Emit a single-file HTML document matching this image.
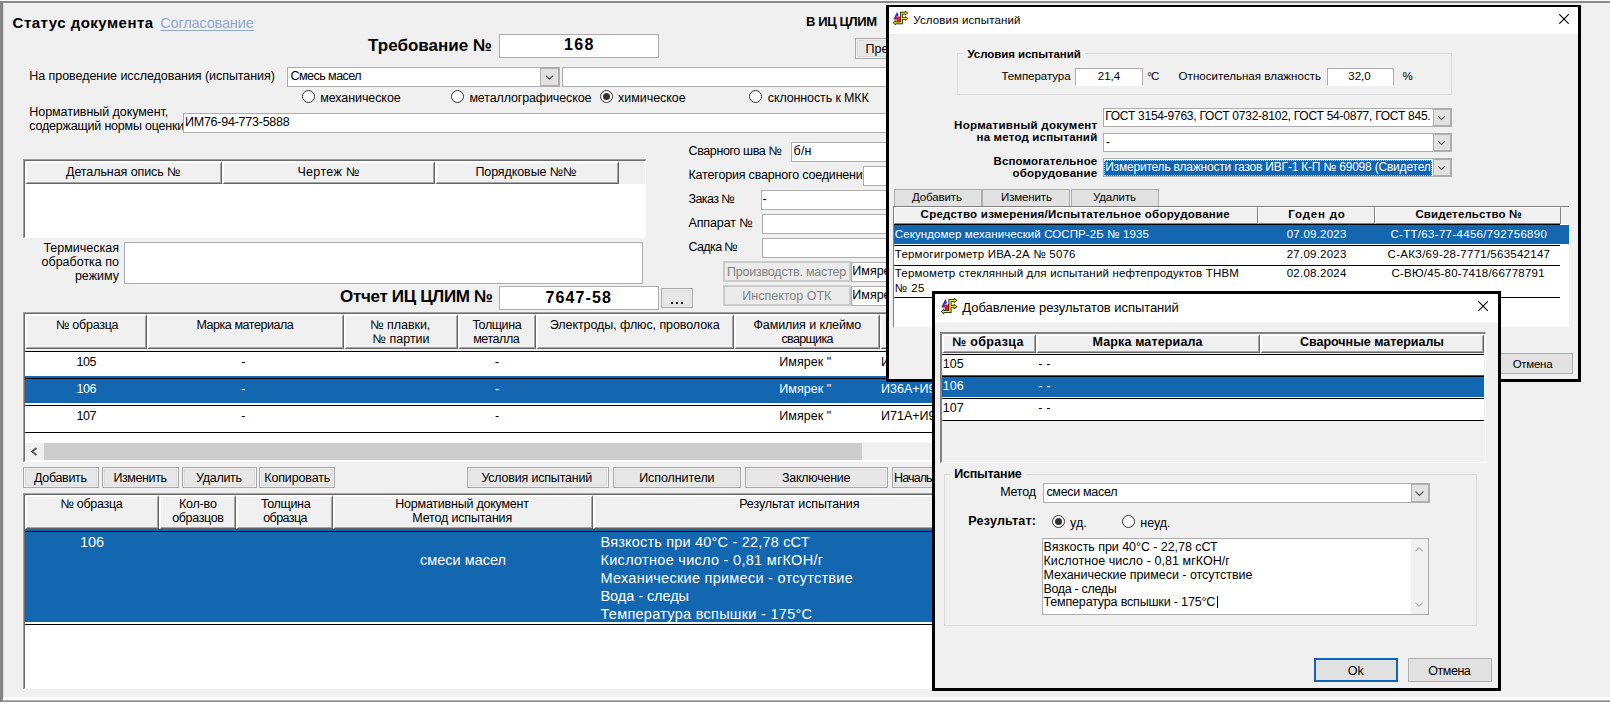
<!DOCTYPE html>
<html><head><meta charset="utf-8"><title>UI</title>
<style>

html,body{margin:0;padding:0;}
body{width:1610px;height:702px;overflow:hidden;background:#f0f0f0;position:relative;font-family:"Liberation Sans",sans-serif;color:#000;}
.a{position:absolute;box-sizing:border-box;}
.t{white-space:nowrap;}
.inp{background:#fff;border:1px solid #adadad;}
.btn{background:#e1e1e1;border:1px solid #adadad;}
.btn2{background:#e7e7e7;border:1px solid #a9a9a9;box-shadow:inset 0 0 0 1px #efefef,inset 0 0 0 2px #dddddd;}
.hd{background:#f0f0f0;border-style:solid;border-width:2px 1px 1px 2px;border-color:#fff #646464 #646464 #fff;box-shadow:inset -1px -1px 0 #a6a6a6;}
.sel{background:#1267b0;}
.ln{background:#000;}
.dlg{background:#f0f0f0;border:3px solid #000;overflow:hidden;}

</style></head>
<body>
<div class="a " style="left:0px;top:0px;width:1610px;height:1px;background:#fafafa"></div>
<div class="a " style="left:0px;top:1px;width:1610px;height:2px;background:#8a8a8a"></div>
<div class="a " style="left:0px;top:1px;width:3px;height:701px;background:#848484"></div>
<div class="a " style="left:3px;top:3px;width:1px;height:699px;background:#d8d8d8"></div>
<div class="a t" style="font-size:15px;line-height:18px;height:18px;top:14.00px;font-weight:bold;letter-spacing:0.484px;left:12.6px;">Статус документа</div>
<div class="a t" style="font-size:14.5px;line-height:17px;height:17px;top:15.00px;color:#8ea9d3;letter-spacing:-0.161px;left:160.2px;text-decoration:underline;text-decoration-thickness:1px;text-underline-offset:2px;">Согласование</div>
<div class="a t" style="font-size:17px;line-height:20px;height:20px;top:36.00px;font-weight:bold;letter-spacing:0.022px;left:368px;">Требование №</div>
<div class="a inp" style="left:499px;top:34px;width:160px;height:24px;"></div>
<div class="a t" style="font-size:16px;line-height:19px;height:19px;top:35.00px;font-weight:bold;letter-spacing:1.304px;left:564.05px;">168</div>
<div class="a t" style="font-size:13px;line-height:16px;height:16px;top:14.00px;font-weight:bold;letter-spacing:-0.405px;left:806px;">В ИЦ ЦЛИМ</div>
<div class="a btn2" style="left:855px;top:38px;width:60px;height:21px;"></div>
<div class="a t" style="font-size:12.5px;line-height:15px;height:15px;top:42.00px;left:865.6px;">Пре</div>
<div class="a t" style="font-size:12.5px;line-height:15px;height:15px;top:69.00px;letter-spacing:-0.055px;left:29.3px;">На проведение исследования (испытания)</div>
<div class="a inp" style="left:287px;top:67px;width:273px;height:20px;"></div>
<div class="a t" style="font-size:12.5px;line-height:15px;height:15px;top:69.00px;letter-spacing:-0.533px;left:290.5px;">Смесь масел</div>
<div class="a " style="left:540px;top:68px;width:19px;height:18px;background:#e1e1e1;border:1px solid #adadad"></div>
<svg class="a" style="left:0;top:0;overflow:visible" width="1" height="1"><path d="M546.0,75.75 L549.5,79.25 L553.0,75.75" stroke="#505050" stroke-width="1.1" fill="none"/></svg>
<div class="a inp" style="left:562px;top:67px;width:330px;height:20px;"></div>
<div class="a" style="left:302.0px;top:90.0px;width:13px;height:13px;border:1px solid #333;border-radius:50%;background:#fff"></div>
<div class="a t" style="font-size:12.5px;line-height:15px;height:15px;top:91.00px;letter-spacing:-0.085px;left:320.2px;">механическое</div>
<div class="a" style="left:451.0px;top:90.0px;width:13px;height:13px;border:1px solid #333;border-radius:50%;background:#fff"></div>
<div class="a t" style="font-size:12.5px;line-height:15px;height:15px;top:91.00px;letter-spacing:-0.135px;left:469.4px;">металлографическое</div>
<div class="a" style="left:600.0px;top:90.0px;width:13px;height:13px;border:1px solid #333;border-radius:50%;background:#fff"></div>
<div class="a" style="left:603.0px;top:93.0px;width:7px;height:7px;border-radius:50%;background:#333"></div>
<div class="a t" style="font-size:12.5px;line-height:15px;height:15px;top:91.00px;letter-spacing:-0.037px;left:618px;">химическое</div>
<div class="a" style="left:749.0px;top:90.0px;width:13px;height:13px;border:1px solid #333;border-radius:50%;background:#fff"></div>
<div class="a t" style="font-size:12.5px;line-height:15px;height:15px;top:91.00px;letter-spacing:-0.125px;left:767.8px;">склонность к МКК</div>
<div class="a t" style="font-size:12.5px;line-height:15px;height:15px;top:105.00px;letter-spacing:-0.056px;left:29.3px;">Нормативный документ,</div>
<div class="a t" style="font-size:12.5px;line-height:15px;height:15px;top:119.00px;letter-spacing:-0.201px;left:29.3px;">содержащий нормы оценки</div>
<div class="a inp" style="left:183px;top:113px;width:709px;height:20px;"></div>
<div class="a t" style="font-size:12.5px;line-height:15px;height:15px;top:115.00px;letter-spacing:-0.243px;left:185px;">ИМ76-94-773-5888</div>
<div class="a " style="left:23px;top:159px;width:623px;height:79px;background:#a0a0a0"></div>
<div class="a " style="left:24px;top:160px;width:622px;height:78px;background:#fff;border-top:1px solid #6c6c6c;border-left:1px solid #6c6c6c;border-right:1px solid #fff;border-bottom:1px solid #fff"></div>
<div class="a " style="left:25px;top:161px;width:620px;height:23px;background:#f0f0f0"></div>
<div class="a hd" style="left:25px;top:161px;width:197px;height:23px;"></div>
<div class="a t" style="font-size:12.5px;line-height:15px;height:15px;top:165.00px;letter-spacing:-0.080px;left:66px;">Детальная опись №</div>
<div class="a hd" style="left:222px;top:161px;width:213px;height:23px;"></div>
<div class="a t" style="font-size:12.5px;line-height:15px;height:15px;top:165.00px;letter-spacing:0.343px;left:297.4px;">Чертеж №</div>
<div class="a hd" style="left:435px;top:161px;width:184px;height:23px;"></div>
<div class="a t" style="font-size:12.5px;line-height:15px;height:15px;top:165.00px;letter-spacing:-0.095px;left:475.4px;">Порядковые №№</div>
<div class="a t" style="font-size:12.5px;line-height:15px;height:15px;top:241.00px;left:43.41px;">Термическая</div>
<div class="a t" style="font-size:12.5px;line-height:15px;height:15px;top:255.00px;left:41.54px;">обработка по</div>
<div class="a t" style="font-size:12.5px;line-height:15px;height:15px;top:269.00px;left:74.91px;">режиму</div>
<div class="a inp" style="left:124px;top:242px;width:519px;height:42px;"></div>
<div class="a t" style="font-size:17px;line-height:20px;height:20px;top:287.00px;font-weight:bold;letter-spacing:-0.318px;left:340px;">Отчет ИЦ ЦЛИМ №</div>
<div class="a inp" style="left:499px;top:286px;width:160px;height:24px;"></div>
<div class="a t" style="font-size:16px;line-height:19px;height:19px;top:288.00px;font-weight:bold;letter-spacing:1.148px;left:545.40px;">7647-58</div>
<div class="a btn2" style="left:661px;top:288px;width:32px;height:20px;"></div>
<div class="a " style="left:670.6px;top:301.8px;width:2.2px;height:2.2px;background:#111;border-radius:0.6px"></div>
<div class="a " style="left:675.7px;top:301.8px;width:2.2px;height:2.2px;background:#111;border-radius:0.6px"></div>
<div class="a " style="left:680.8px;top:301.8px;width:2.2px;height:2.2px;background:#111;border-radius:0.6px"></div>
<div class="a t" style="font-size:12.5px;line-height:15px;height:15px;top:144.00px;letter-spacing:-0.389px;left:688.5px;">Сварного шва №</div>
<div class="a inp" style="left:791px;top:142px;width:101px;height:20px;"></div>
<div class="a t" style="font-size:12.5px;line-height:15px;height:15px;top:144.00px;letter-spacing:0.232px;left:793.5px;">б/н</div>
<div class="a t" style="font-size:12.5px;line-height:15px;height:15px;top:168.00px;letter-spacing:-0.179px;left:688.5px;">Категория сварного соединени</div>
<div class="a inp" style="left:863px;top:166px;width:30px;height:20px;"></div>
<div class="a t" style="font-size:12.5px;line-height:15px;height:15px;top:192.00px;letter-spacing:-0.595px;left:688.5px;">Заказ №</div>
<div class="a inp" style="left:761px;top:190px;width:131px;height:20px;"></div>
<div class="a t" style="font-size:12.5px;line-height:15px;height:15px;top:192.00px;left:762.6px;">-</div>
<div class="a t" style="font-size:12.5px;line-height:15px;height:15px;top:216.00px;letter-spacing:-0.120px;left:688.5px;">Аппарат №</div>
<div class="a inp" style="left:762px;top:214px;width:130px;height:20px;"></div>
<div class="a t" style="font-size:12.5px;line-height:15px;height:15px;top:240.00px;letter-spacing:-0.632px;left:688.5px;">Садка №</div>
<div class="a inp" style="left:762px;top:238px;width:130px;height:20px;"></div>
<div class="a " style="left:723px;top:261px;width:128px;height:21px;background:#ebebeb;border:2px solid #cbcbcb"></div>
<div class="a t" style="font-size:12.5px;line-height:15px;height:15px;top:265.00px;color:#838383;letter-spacing:-0.206px;left:727px;">Производств. мастер</div>
<div class="a " style="left:723px;top:285px;width:128px;height:21px;background:#ebebeb;border:2px solid #cbcbcb"></div>
<div class="a t" style="font-size:12.5px;line-height:15px;height:15px;top:289.00px;color:#838383;letter-spacing:-0.005px;left:742.3px;">Инспектор ОТК</div>
<div class="a inp" style="left:851px;top:262px;width:45px;height:20px;"></div>
<div class="a t" style="font-size:12.5px;line-height:15px;height:15px;top:264.00px;left:852.3px;">Имярек</div>
<div class="a inp" style="left:851px;top:286px;width:45px;height:20px;"></div>
<div class="a t" style="font-size:12.5px;line-height:15px;height:15px;top:288.00px;left:852.3px;">Имярек</div>
<div class="a " style="left:23px;top:312px;width:920px;height:150px;background:#a0a0a0"></div>
<div class="a " style="left:24px;top:313px;width:919px;height:149px;background:#fff;border-top:1px solid #6c6c6c;border-left:1px solid #6c6c6c;border-right:1px solid #fff;border-bottom:1px solid #fff"></div>
<div class="a " style="left:25px;top:314px;width:918px;height:37px;background:#f0f0f0"></div>
<div class="a hd" style="left:25px;top:314px;width:122px;height:35px;"></div>
<div class="a t" style="font-size:12.5px;line-height:15px;height:15px;top:318.00px;letter-spacing:-0.262px;left:56px;">№ образца</div>
<div class="a hd" style="left:147px;top:314px;width:197px;height:35px;"></div>
<div class="a t" style="font-size:12.5px;line-height:15px;height:15px;top:318.00px;letter-spacing:-0.440px;left:196.4px;">Марка материала</div>
<div class="a hd" style="left:344px;top:314px;width:114px;height:35px;"></div>
<div class="a t" style="font-size:12.5px;line-height:15px;height:15px;top:318.00px;letter-spacing:-0.058px;left:370.3px;">№ плавки,</div>
<div class="a t" style="font-size:12.5px;line-height:15px;height:15px;top:332.00px;letter-spacing:0.004px;left:372.6px;">№ партии</div>
<div class="a hd" style="left:458px;top:314px;width:78px;height:35px;"></div>
<div class="a t" style="font-size:12.5px;line-height:15px;height:15px;top:318.00px;letter-spacing:-0.425px;left:472.4px;">Толщина</div>
<div class="a t" style="font-size:12.5px;line-height:15px;height:15px;top:332.00px;letter-spacing:-0.451px;left:473.2px;">металла</div>
<div class="a hd" style="left:536px;top:314px;width:198px;height:35px;"></div>
<div class="a t" style="font-size:12.5px;line-height:15px;height:15px;top:318.00px;letter-spacing:-0.076px;left:549.8px;">Электроды, флюс, проволока</div>
<div class="a hd" style="left:734px;top:314px;width:146px;height:35px;"></div>
<div class="a t" style="font-size:12.5px;line-height:15px;height:15px;top:318.00px;letter-spacing:-0.099px;left:753.4px;">Фамилия и клеймо</div>
<div class="a t" style="font-size:12.5px;line-height:15px;height:15px;top:332.00px;letter-spacing:-0.674px;left:781.5px;">сварщика</div>
<div class="a hd" style="left:880px;top:314px;width:62px;height:35px;"></div>
<div class="a ln" style="left:25px;top:351px;width:918px;height:1px;"></div>
<div class="a t" style="font-size:12.5px;line-height:15px;height:15px;top:355.00px;color:#000;letter-spacing:-0.427px;left:76.50px;">105</div>
<div class="a t" style="font-size:12.5px;line-height:15px;height:15px;top:355.00px;color:#000;left:241.32px;">-</div>
<div class="a t" style="font-size:12.5px;line-height:15px;height:15px;top:355.00px;color:#000;left:494.92px;">-</div>
<div class="a t" style="font-size:12.5px;line-height:15px;height:15px;top:355.00px;color:#000;letter-spacing:0.039px;left:779.3px;">Имярек &quot;</div>
<div class="a t" style="font-size:12.5px;line-height:15px;height:15px;top:355.00px;color:#000;left:881px;">И</div>
<div class="a sel" style="left:25px;top:376px;width:918px;height:27px;"></div>
<div class="a ln" style="left:25px;top:378px;width:918px;height:1px;"></div>
<div class="a t" style="font-size:12.5px;line-height:15px;height:15px;top:382.00px;color:#fff;letter-spacing:-0.427px;left:76.50px;">106</div>
<div class="a t" style="font-size:12.5px;line-height:15px;height:15px;top:382.00px;color:#fff;left:241.32px;">-</div>
<div class="a t" style="font-size:12.5px;line-height:15px;height:15px;top:382.00px;color:#fff;left:494.92px;">-</div>
<div class="a t" style="font-size:12.5px;line-height:15px;height:15px;top:382.00px;color:#fff;letter-spacing:0.039px;left:779.3px;">Имярек &quot;</div>
<div class="a t" style="font-size:12.5px;line-height:15px;height:15px;top:382.00px;color:#fff;left:881px;">И36А+И9</div>
<div class="a ln" style="left:25px;top:405px;width:918px;height:1px;"></div>
<div class="a t" style="font-size:12.5px;line-height:15px;height:15px;top:409.00px;color:#000;letter-spacing:-0.427px;left:76.50px;">107</div>
<div class="a t" style="font-size:12.5px;line-height:15px;height:15px;top:409.00px;color:#000;left:241.32px;">-</div>
<div class="a t" style="font-size:12.5px;line-height:15px;height:15px;top:409.00px;color:#000;left:494.92px;">-</div>
<div class="a t" style="font-size:12.5px;line-height:15px;height:15px;top:409.00px;color:#000;letter-spacing:0.039px;left:779.3px;">Имярек &quot;</div>
<div class="a t" style="font-size:12.5px;line-height:15px;height:15px;top:409.00px;color:#000;left:881px;">И71А+И9</div>
<div class="a ln" style="left:25px;top:432px;width:918px;height:1px;"></div>
<div class="a " style="left:25px;top:443px;width:918px;height:17px;background:#f0f0f0"></div>
<div class="a " style="left:44px;top:443px;width:818px;height:17px;background:#cdcdcd"></div>
<svg class="a" style="left:30px;top:447px" width="8" height="9" viewBox="0 0 8 9"><path d="M6.5,1 L2,4.5 L6.5,8" stroke="#555" stroke-width="1.8" fill="none"/></svg>
<div class="a btn2" style="left:23px;top:467px;width:76px;height:21px;"></div>
<div class="a t" style="font-size:12.5px;line-height:15px;height:15px;top:471.00px;letter-spacing:-0.320px;left:34px;">Добавить</div>
<div class="a btn2" style="left:102px;top:467px;width:77px;height:21px;"></div>
<div class="a t" style="font-size:12.5px;line-height:15px;height:15px;top:471.00px;letter-spacing:-0.397px;left:113.4px;">Изменить</div>
<div class="a btn2" style="left:181.5px;top:467px;width:75.5px;height:21px;"></div>
<div class="a t" style="font-size:12.5px;line-height:15px;height:15px;top:471.00px;letter-spacing:-0.303px;left:196.1px;">Удалить</div>
<div class="a btn2" style="left:259px;top:467px;width:76px;height:21px;"></div>
<div class="a t" style="font-size:12.5px;line-height:15px;height:15px;top:471.00px;letter-spacing:-0.144px;left:264.3px;">Копировать</div>
<div class="a btn2" style="left:466.5px;top:467px;width:142.5px;height:21px;"></div>
<div class="a t" style="font-size:12.5px;line-height:15px;height:15px;top:471.00px;letter-spacing:-0.193px;left:481.4px;">Условия испытаний</div>
<div class="a btn2" style="left:613px;top:467px;width:128px;height:21px;"></div>
<div class="a t" style="font-size:12.5px;line-height:15px;height:15px;top:471.00px;letter-spacing:-0.085px;left:639.2px;">Исполнители</div>
<div class="a btn2" style="left:745px;top:467px;width:143px;height:21px;"></div>
<div class="a t" style="font-size:12.5px;line-height:15px;height:15px;top:471.00px;letter-spacing:-0.245px;left:781.9px;">Заключение</div>
<div class="a btn2" style="left:892px;top:467px;width:60px;height:21px;"></div>
<div class="a t" style="font-size:12.5px;line-height:15px;height:15px;top:471.00px;letter-spacing:-0.894px;left:894.1px;">Началь</div>
<div class="a " style="left:23px;top:493px;width:920px;height:196px;background:#a0a0a0"></div>
<div class="a " style="left:24px;top:494px;width:919px;height:195px;background:#fff;border-top:1px solid #6c6c6c;border-left:1px solid #6c6c6c;border-right:1px solid #fff;border-bottom:1px solid #fff"></div>
<div class="a " style="left:25px;top:495px;width:918px;height:35px;background:#f0f0f0"></div>
<div class="a hd" style="left:25px;top:495px;width:134px;height:34px;"></div>
<div class="a t" style="font-size:12.5px;line-height:15px;height:15px;top:497.00px;letter-spacing:-0.275px;left:60.4px;">№ образца</div>
<div class="a hd" style="left:159px;top:495px;width:77px;height:34px;"></div>
<div class="a t" style="font-size:12.5px;line-height:15px;height:15px;top:497.00px;letter-spacing:-0.173px;left:178.9px;">Кол-во</div>
<div class="a t" style="font-size:12.5px;line-height:15px;height:15px;top:511.00px;letter-spacing:-0.345px;left:172.2px;">образцов</div>
<div class="a hd" style="left:236px;top:495px;width:97px;height:34px;"></div>
<div class="a t" style="font-size:12.5px;line-height:15px;height:15px;top:497.00px;letter-spacing:-0.358px;left:261px;">Толщина</div>
<div class="a t" style="font-size:12.5px;line-height:15px;height:15px;top:511.00px;letter-spacing:-0.569px;left:263.2px;">образца</div>
<div class="a hd" style="left:333px;top:495px;width:260px;height:34px;"></div>
<div class="a t" style="font-size:12.5px;line-height:15px;height:15px;top:497.00px;letter-spacing:-0.228px;left:395.3px;">Нормативный документ</div>
<div class="a t" style="font-size:12.5px;line-height:15px;height:15px;top:511.00px;letter-spacing:-0.171px;left:412.3px;">Метод испытания</div>
<div class="a hd" style="left:593px;top:495px;width:350px;height:34px;"></div>
<div class="a t" style="font-size:12.5px;line-height:15px;height:15px;top:497.00px;letter-spacing:-0.122px;left:739.2px;">Результат испытания</div>
<div class="a sel" style="left:25px;top:529px;width:918px;height:93px;"></div>
<div class="a ln" style="left:25px;top:531px;width:918px;height:1px;"></div>
<div class="a ln" style="left:25px;top:624px;width:918px;height:1px;"></div>
<div class="a t" style="font-size:14.5px;line-height:17px;height:17px;top:534.00px;color:#fff;left:79.90px;">106</div>
<div class="a t" style="font-size:14.5px;line-height:17px;height:17px;top:552.00px;color:#fff;left:420.01px;">смеси масел</div>
<div class="a t" style="font-size:14.5px;line-height:17px;height:17px;top:534.00px;color:#fff;letter-spacing:0.190px;left:600.5px;">Вязкость при 40°C - 22,78 сСТ</div>
<div class="a t" style="font-size:14.5px;line-height:17px;height:17px;top:552.00px;color:#fff;letter-spacing:0.283px;left:600.5px;">Кислотное число - 0,81 мгКОН/г</div>
<div class="a t" style="font-size:14.5px;line-height:17px;height:17px;top:570.00px;color:#fff;letter-spacing:0.260px;left:600.5px;">Механические примеси - отсутствие</div>
<div class="a t" style="font-size:14.5px;line-height:17px;height:17px;top:588.00px;color:#fff;letter-spacing:-0.060px;left:600.5px;">Вода - следы</div>
<div class="a t" style="font-size:14.5px;line-height:17px;height:17px;top:606.00px;color:#fff;letter-spacing:0.276px;left:600.5px;">Температура вспышки - 175°C</div>
<div class="a " style="left:0px;top:697px;width:1610px;height:3px;background:#fff"></div>
<div class="a " style="left:0px;top:700px;width:1610px;height:1px;background:#b4b4b4"></div>
<div class="a " style="left:0px;top:701px;width:1610px;height:1px;background:#8a8a8a"></div>
<div class="a " style="left:0px;top:1px;width:3px;height:701px;background:#848484"></div>
<div class="a " style="left:886px;top:4.6px;width:695px;height:377px;background:#f0f0f0;border:3px solid #000;border-top-width:2.4px"></div>
<div class="a " style="left:889px;top:7px;width:689px;height:27px;background:#fff"></div>
<svg class="a" style="left:893px;top:11px" width="15" height="14" viewBox="0 0 16 16" preserveAspectRatio="none">
<polygon points="4.3,1 0.2,9.6 3.6,9.6 5.9,4.2" fill="#2a35b8"/>
<rect x="3.7" y="6" width="4.4" height="6" fill="#f01818"/>
<rect x="3.7" y="6" width="4.4" height="1" fill="#f88"/>
<g fill="none" stroke="#000" stroke-width="3" stroke-linejoin="miter"><path d="M14,2.4 H9 V13.5 H2"/><path d="M9,8.6 H14"/></g>
<g fill="#000"><polygon points="12.8,-0.4 16.4,2.4 12.8,5.2"/><polygon points="12.8,5.8 16.4,8.6 12.8,11.4"/><polygon points="3.2,10.7 -0.4,13.5 3.2,16.3"/></g>
<g fill="none" stroke="#f4ee10" stroke-width="1.5"><path d="M14,2.4 H9 V13.5 H2"/><path d="M9,8.6 H14"/></g>
<g fill="#f4ee10"><polygon points="13.4,0.9 15.5,2.4 13.4,3.9"/><polygon points="13.4,7.1 15.5,8.6 13.4,10.1"/><polygon points="2.6,12 0.5,13.5 2.6,15"/></g>
</svg>
<div class="a t" style="font-size:11.5px;line-height:14px;height:14px;top:13.00px;letter-spacing:0.152px;left:913.2px;">Условия испытаний</div>
<svg class="a" style="left:1559px;top:13.8px" width="10" height="10" viewBox="0 0 10 10"><path d="M0.3,0.3 L9.7,9.7 M9.7,0.3 L0.3,9.7" stroke="#000" stroke-width="1.1" fill="none"/></svg>
<div class="a " style="left:957px;top:53px;width:495px;height:42px;border:1px solid #dcdcdc"></div>
<div class="a " style="left:963px;top:48px;width:122px;height:12px;background:#f0f0f0"></div>
<div class="a t" style="font-size:11.5px;line-height:14px;height:14px;top:47.00px;font-weight:bold;letter-spacing:-0.068px;left:967.5px;">Условия испытаний</div>
<div class="a t" style="font-size:11.5px;line-height:14px;height:14px;top:69.00px;letter-spacing:-0.045px;left:1001.4px;">Температура</div>
<div class="a " style="left:1075px;top:68px;width:68px;height:18px;background:#fff;border:1px solid #adadad;border-bottom-color:#fff"></div>
<div class="a t" style="font-size:11.5px;line-height:14px;height:14px;top:69.00px;left:1097.81px;">21,4</div>
<div class="a t" style="font-size:11.5px;line-height:14px;height:14px;top:69.00px;letter-spacing:-0.903px;left:1147.3px;">°C</div>
<div class="a t" style="font-size:11.5px;line-height:14px;height:14px;top:69.00px;letter-spacing:0.039px;left:1178.6px;">Относительная влажность</div>
<div class="a " style="left:1327px;top:68px;width:67px;height:18px;background:#fff;border:1px solid #adadad;border-bottom-color:#fff"></div>
<div class="a t" style="font-size:11.5px;line-height:14px;height:14px;top:69.00px;left:1348.31px;">32,0</div>
<div class="a t" style="font-size:11.5px;line-height:14px;height:14px;top:69.00px;left:1402.5px;">%</div>
<div class="a t" style="font-size:11.5px;line-height:14px;height:14px;top:118.00px;font-weight:bold;letter-spacing:0.292px;left:954.10px;">Нормативный документ</div>
<div class="a t" style="font-size:11.5px;line-height:14px;height:14px;top:130.00px;font-weight:bold;letter-spacing:0.189px;left:976.50px;">на метод испытаний</div>
<div class="a t" style="font-size:11.5px;line-height:14px;height:14px;top:154.00px;font-weight:bold;letter-spacing:0.132px;left:993.50px;">Вспомогательное</div>
<div class="a t" style="font-size:11.5px;line-height:14px;height:14px;top:166.00px;font-weight:bold;letter-spacing:0.229px;left:1012.50px;">оборудование</div>
<div class="a inp" style="left:1103px;top:108px;width:349px;height:19px;"></div>
<div class="a " style="left:1433px;top:109px;width:18px;height:17px;background:#e1e1e1;border:1px solid #adadad"></div>
<svg class="a" style="left:0;top:0;overflow:visible" width="1" height="1"><path d="M1438.25,116.4 L1441.5,119.6 L1444.75,116.4" stroke="#555" stroke-width="1.1" fill="none"/></svg>
<div class="a t" style="font-size:12px;line-height:14px;height:14px;top:109.00px;letter-spacing:-0.241px;left:1105.2px;">ГОСТ 3154-9763, ГОСТ 0732-8102, ГОСТ 54-0877, ГОСТ 845.</div>
<div class="a inp" style="left:1103px;top:133px;width:349px;height:19px;"></div>
<div class="a " style="left:1433px;top:134px;width:18px;height:17px;background:#e1e1e1;border:1px solid #adadad"></div>
<svg class="a" style="left:0;top:0;overflow:visible" width="1" height="1"><path d="M1438.25,141.4 L1441.5,144.6 L1444.75,141.4" stroke="#555" stroke-width="1.1" fill="none"/></svg>
<div class="a t" style="font-size:12px;line-height:14px;height:14px;top:135.00px;left:1106px;">-</div>
<div class="a inp" style="left:1103px;top:158px;width:349px;height:19px;"></div>
<div class="a " style="left:1433px;top:159px;width:18px;height:17px;background:#e1e1e1;border:1px solid #adadad"></div>
<svg class="a" style="left:0;top:0;overflow:visible" width="1" height="1"><path d="M1438.25,166.4 L1441.5,169.6 L1444.75,166.4" stroke="#555" stroke-width="1.1" fill="none"/></svg>
<div class="a " style="left:1104px;top:160px;width:328px;height:15.5px;background:#1165b0;outline:1px dotted #ddd;outline-offset:-1px"></div>
<div class="a t" style="font-size:12px;line-height:14px;height:14px;top:160.00px;color:#fff;letter-spacing:-0.204px;left:1105.2px;">Измеритель влажности газов ИВГ-1 К-П № 69098 (Свидетел</div>
<div class="a " style="left:893.5px;top:189px;width:88px;height:16.5px;background:#e1e1e1;border:1px solid #adadad;border-bottom:none"></div>
<div class="a t" style="font-size:11.5px;line-height:14px;height:14px;top:190.00px;letter-spacing:-0.103px;left:911.9px;">Добавить</div>
<div class="a " style="left:982px;top:189px;width:88px;height:16.5px;background:#e1e1e1;border:1px solid #adadad;border-bottom:none"></div>
<div class="a t" style="font-size:11.5px;line-height:14px;height:14px;top:190.00px;letter-spacing:-0.124px;left:1001px;">Изменить</div>
<div class="a " style="left:1071px;top:189px;width:88px;height:16.5px;background:#e1e1e1;border:1px solid #adadad;border-bottom:none"></div>
<div class="a t" style="font-size:11.5px;line-height:14px;height:14px;top:190.00px;letter-spacing:-0.151px;left:1093px;">Удалить</div>
<div class="a " style="left:893px;top:205.5px;width:676px;height:121px;background:#fff;border-left:1px solid #828282;border-top:1px solid #828282"></div>
<div class="a " style="left:894px;top:206.5px;width:675px;height:17px;background:#f0f0f0"></div>
<div class="a " style="left:894px;top:206.5px;width:363.5px;height:17px;background:#f0f0f0;border-top:1px solid #fff;border-left:1px solid #fff;border-right:1.6px solid #828282;border-bottom:1.6px solid #828282"></div>
<div class="a t" style="font-size:11.5px;line-height:14px;height:14px;top:207.00px;font-weight:bold;letter-spacing:0.244px;left:920.6px;">Средство измерения/Испытательное оборудование</div>
<div class="a " style="left:1257.5px;top:206.5px;width:117.5px;height:17px;background:#f0f0f0;border-top:1px solid #fff;border-left:1px solid #fff;border-right:1.6px solid #828282;border-bottom:1.6px solid #828282"></div>
<div class="a t" style="font-size:11.5px;line-height:14px;height:14px;top:207.00px;font-weight:bold;letter-spacing:0.788px;left:1288.3px;">Годен до</div>
<div class="a " style="left:1375px;top:206.5px;width:185.5px;height:17px;background:#f0f0f0;border-top:1px solid #fff;border-left:1px solid #fff;border-right:1.6px solid #828282;border-bottom:1.6px solid #828282"></div>
<div class="a t" style="font-size:11.5px;line-height:14px;height:14px;top:207.00px;font-weight:bold;letter-spacing:0.145px;left:1415.4px;">Свидетельство №</div>
<div class="a ln" style="left:894px;top:224px;width:666px;height:1px;"></div>
<div class="a sel" style="left:894px;top:225px;width:675px;height:19px;"></div>
<div class="a ln" style="left:894px;top:244.6px;width:666px;height:1px;"></div>
<div class="a ln" style="left:894px;top:264.5px;width:666px;height:1px;"></div>
<div class="a ln" style="left:894px;top:297px;width:666px;height:1px;"></div>
<div class="a t" style="font-size:11.5px;line-height:14px;height:14px;top:227.00px;color:#fff;letter-spacing:0.097px;left:894.8px;">Секундомер механический СОСПР-2Б № 1935</div>
<div class="a t" style="font-size:11.5px;line-height:14px;height:14px;top:227.00px;color:#fff;letter-spacing:0.239px;left:1286.7px;">07.09.2023</div>
<div class="a t" style="font-size:11.5px;line-height:14px;height:14px;top:227.00px;color:#fff;letter-spacing:0.315px;left:1390.4px;">С-ТТ/63-77-4456/792756890</div>
<div class="a t" style="font-size:11.5px;line-height:14px;height:14px;top:247.00px;letter-spacing:0.201px;left:894.8px;">Термогигрометр ИВА-2А № 5076</div>
<div class="a t" style="font-size:11.5px;line-height:14px;height:14px;top:247.00px;letter-spacing:0.239px;left:1286.7px;">27.09.2023</div>
<div class="a t" style="font-size:11.5px;line-height:14px;height:14px;top:247.00px;letter-spacing:0.249px;left:1387.6px;">С-АКЗ/69-28-7771/563542147</div>
<div class="a t" style="font-size:11.5px;line-height:14px;height:14px;top:266.00px;letter-spacing:0.171px;left:894.8px;">Термометр стеклянный для испытаний нефтепродуктов ТНВМ</div>
<div class="a t" style="font-size:11.5px;line-height:14px;height:14px;top:281.00px;letter-spacing:0.426px;left:894.8px;">№ 25</div>
<div class="a t" style="font-size:11.5px;line-height:14px;height:14px;top:266.00px;letter-spacing:0.239px;left:1286.7px;">02.08.2024</div>
<div class="a t" style="font-size:11.5px;line-height:14px;height:14px;top:266.00px;letter-spacing:0.231px;left:1391.5px;">С-ВЮ/45-80-7418/66778791</div>
<div class="a btn" style="left:1498px;top:352.5px;width:75px;height:21px;"></div>
<div class="a t" style="font-size:11.5px;line-height:14px;height:14px;top:357.00px;letter-spacing:-0.272px;left:1512.7px;">Отмена</div>
<div class="a " style="left:932px;top:290.5px;width:569px;height:400.3px;background:#f0f0f0;border:3px solid #000"></div>
<div class="a " style="left:935px;top:293.5px;width:563px;height:29.5px;background:#fff"></div>
<svg class="a" style="left:941px;top:298px" width="16" height="16" viewBox="0 0 16 16" preserveAspectRatio="none">
<polygon points="4.3,1 0.2,9.6 3.6,9.6 5.9,4.2" fill="#2a35b8"/>
<rect x="3.7" y="6" width="4.4" height="6" fill="#f01818"/>
<rect x="3.7" y="6" width="4.4" height="1" fill="#f88"/>
<g fill="none" stroke="#000" stroke-width="3" stroke-linejoin="miter"><path d="M14,2.4 H9 V13.5 H2"/><path d="M9,8.6 H14"/></g>
<g fill="#000"><polygon points="12.8,-0.4 16.4,2.4 12.8,5.2"/><polygon points="12.8,5.8 16.4,8.6 12.8,11.4"/><polygon points="3.2,10.7 -0.4,13.5 3.2,16.3"/></g>
<g fill="none" stroke="#f4ee10" stroke-width="1.5"><path d="M14,2.4 H9 V13.5 H2"/><path d="M9,8.6 H14"/></g>
<g fill="#f4ee10"><polygon points="13.4,0.9 15.5,2.4 13.4,3.9"/><polygon points="13.4,7.1 15.5,8.6 13.4,10.1"/><polygon points="2.6,12 0.5,13.5 2.6,15"/></g>
</svg>
<div class="a t" style="font-size:13px;line-height:16px;height:16px;top:300.00px;letter-spacing:-0.051px;left:962.3px;">Добавление результатов испытаний</div>
<svg class="a" style="left:1477.7px;top:300.8px" width="10.2" height="10.2" viewBox="0 0 10.2 10.2"><path d="M0.3,0.3 L9.899999999999999,9.899999999999999 M9.899999999999999,0.3 L0.3,9.899999999999999" stroke="#000" stroke-width="1.1" fill="none"/></svg>
<div class="a " style="left:940px;top:332px;width:546px;height:131px;background:#f0f0f0;border-top:2px solid #828282;border-left:2px solid #828282;border-right:1px solid #fff;border-bottom:1px solid #fff"></div>
<div class="a hd" style="left:942px;top:334px;width:94px;height:19px;"></div>
<div class="a t" style="font-size:12.5px;line-height:15px;height:15px;top:335.00px;font-weight:bold;letter-spacing:0.325px;left:952.3px;">№ образца</div>
<div class="a hd" style="left:1036px;top:334px;width:224px;height:19px;"></div>
<div class="a t" style="font-size:12.5px;line-height:15px;height:15px;top:335.00px;font-weight:bold;letter-spacing:0.136px;left:1092.5px;">Марка материала</div>
<div class="a hd" style="left:1260px;top:334px;width:224px;height:19px;"></div>
<div class="a t" style="font-size:12.5px;line-height:15px;height:15px;top:335.00px;font-weight:bold;letter-spacing:-0.020px;left:1300px;">Сварочные материалы</div>
<div class="a " style="left:942px;top:355px;width:542px;height:65px;background:#fff"></div>
<div class="a ln" style="left:942px;top:354px;width:542px;height:1px;"></div>
<div class="a t" style="font-size:12.5px;line-height:15px;height:15px;top:357.00px;color:#000;left:942.8px;">105</div>
<div class="a t" style="font-size:12.5px;line-height:15px;height:15px;top:357.00px;color:#000;letter-spacing:0.152px;left:1038.2px;">- -</div>
<div class="a sel" style="left:942px;top:375px;width:542px;height:22px;"></div>
<div class="a ln" style="left:942px;top:376px;width:542px;height:1px;"></div>
<div class="a t" style="font-size:12.5px;line-height:15px;height:15px;top:379.00px;color:#fff;left:942.8px;">106</div>
<div class="a t" style="font-size:12.5px;line-height:15px;height:15px;top:379.00px;color:#fff;letter-spacing:0.152px;left:1038.2px;">- -</div>
<div class="a ln" style="left:942px;top:398px;width:542px;height:1px;"></div>
<div class="a t" style="font-size:12.5px;line-height:15px;height:15px;top:401.00px;color:#000;left:942.8px;">107</div>
<div class="a t" style="font-size:12.5px;line-height:15px;height:15px;top:401.00px;color:#000;letter-spacing:0.152px;left:1038.2px;">- -</div>
<div class="a ln" style="left:942px;top:420px;width:542px;height:1px;"></div>
<div class="a " style="left:944px;top:474px;width:533px;height:152px;border:1px solid #dcdcdc"></div>
<div class="a " style="left:950px;top:468px;width:76px;height:12px;background:#f0f0f0"></div>
<div class="a t" style="font-size:12.5px;line-height:15px;height:15px;top:467.00px;font-weight:bold;letter-spacing:-0.227px;left:954.2px;">Испытание</div>
<div class="a t" style="font-size:12.5px;line-height:15px;height:15px;top:485.00px;letter-spacing:-0.211px;left:1000.2px;">Метод</div>
<div class="a inp" style="left:1042.5px;top:483px;width:387px;height:20px;"></div>
<div class="a " style="left:1410.5px;top:484px;width:18px;height:18px;background:#e1e1e1;border:1px solid #adadad"></div>
<svg class="a" style="left:0;top:0;overflow:visible" width="1" height="1"><path d="M1415.5,491.5 L1419.5,495.5 L1423.5,491.5" stroke="#505050" stroke-width="1.1" fill="none"/></svg>
<div class="a t" style="font-size:12.5px;line-height:15px;height:15px;top:485.00px;letter-spacing:-0.303px;left:1046.4px;">смеси масел</div>
<div class="a t" style="font-size:12.5px;line-height:15px;height:15px;top:514.00px;font-weight:bold;letter-spacing:0.239px;left:968.3px;">Результат:</div>
<div class="a" style="left:1051.7px;top:515.0px;width:13px;height:13px;border:1px solid #333;border-radius:50%;background:#fff"></div>
<div class="a" style="left:1054.7px;top:518.0px;width:7px;height:7px;border-radius:50%;background:#333"></div>
<div class="a t" style="font-size:12.5px;line-height:15px;height:15px;top:516.00px;letter-spacing:0.049px;left:1070.1px;">уд.</div>
<div class="a" style="left:1121.9px;top:515.0px;width:13px;height:13px;border:1px solid #333;border-radius:50%;background:#fff"></div>
<div class="a t" style="font-size:12.5px;line-height:15px;height:15px;top:516.00px;letter-spacing:-0.054px;left:1140.3px;">неуд.</div>
<div class="a inp" style="left:1041.5px;top:538px;width:387.5px;height:77px;"></div>
<div class="a " style="left:1410.5px;top:539px;width:17.5px;height:75px;background:#f0f0f0"></div>
<svg class="a" style="left:0;top:0;overflow:visible" width="1" height="1"><path d="M1415.5,551.25 L1419,547.75 L1422.5,551.25" stroke="#b0b0b0" stroke-width="1.1" fill="none"/></svg>
<svg class="a" style="left:0;top:0;overflow:visible" width="1" height="1"><path d="M1415.5,602.75 L1419,606.25 L1422.5,602.75" stroke="#b0b0b0" stroke-width="1.1" fill="none"/></svg>
<div class="a t" style="font-size:12.5px;line-height:15px;height:15px;top:540.00px;letter-spacing:-0.056px;left:1043.5px;">Вязкость при 40°C - 22,78 сСТ</div>
<div class="a t" style="font-size:12.5px;line-height:15px;height:15px;top:554.00px;letter-spacing:0.057px;left:1043.5px;">Кислотное число - 0,81 мгКОН/г</div>
<div class="a t" style="font-size:12.5px;line-height:15px;height:15px;top:568.00px;letter-spacing:-0.042px;left:1043.5px;">Механические примеси - отсутствие</div>
<div class="a t" style="font-size:12.5px;line-height:15px;height:15px;top:582.00px;letter-spacing:-0.333px;left:1043.5px;">Вода - следы</div>
<div class="a t" style="font-size:12.5px;line-height:15px;height:15px;top:595.00px;letter-spacing:-0.167px;left:1043.5px;">Температура вспышки - 175°C</div>
<div class="a " style="left:1216.5px;top:596px;width:1px;height:12px;background:#000"></div>
<div class="a " style="left:1314px;top:658px;width:84.3px;height:23.8px;background:#e1e1e1;border:2px solid #1165b0"></div>
<div class="a t" style="font-size:12.5px;line-height:15px;height:15px;top:664.00px;left:1347.81px;">Ok</div>
<div class="a btn" style="left:1408px;top:658px;width:84.2px;height:23.8px;"></div>
<div class="a t" style="font-size:12.5px;line-height:15px;height:15px;top:664.00px;letter-spacing:-0.469px;left:1428.3px;">Отмена</div>
</body></html>
